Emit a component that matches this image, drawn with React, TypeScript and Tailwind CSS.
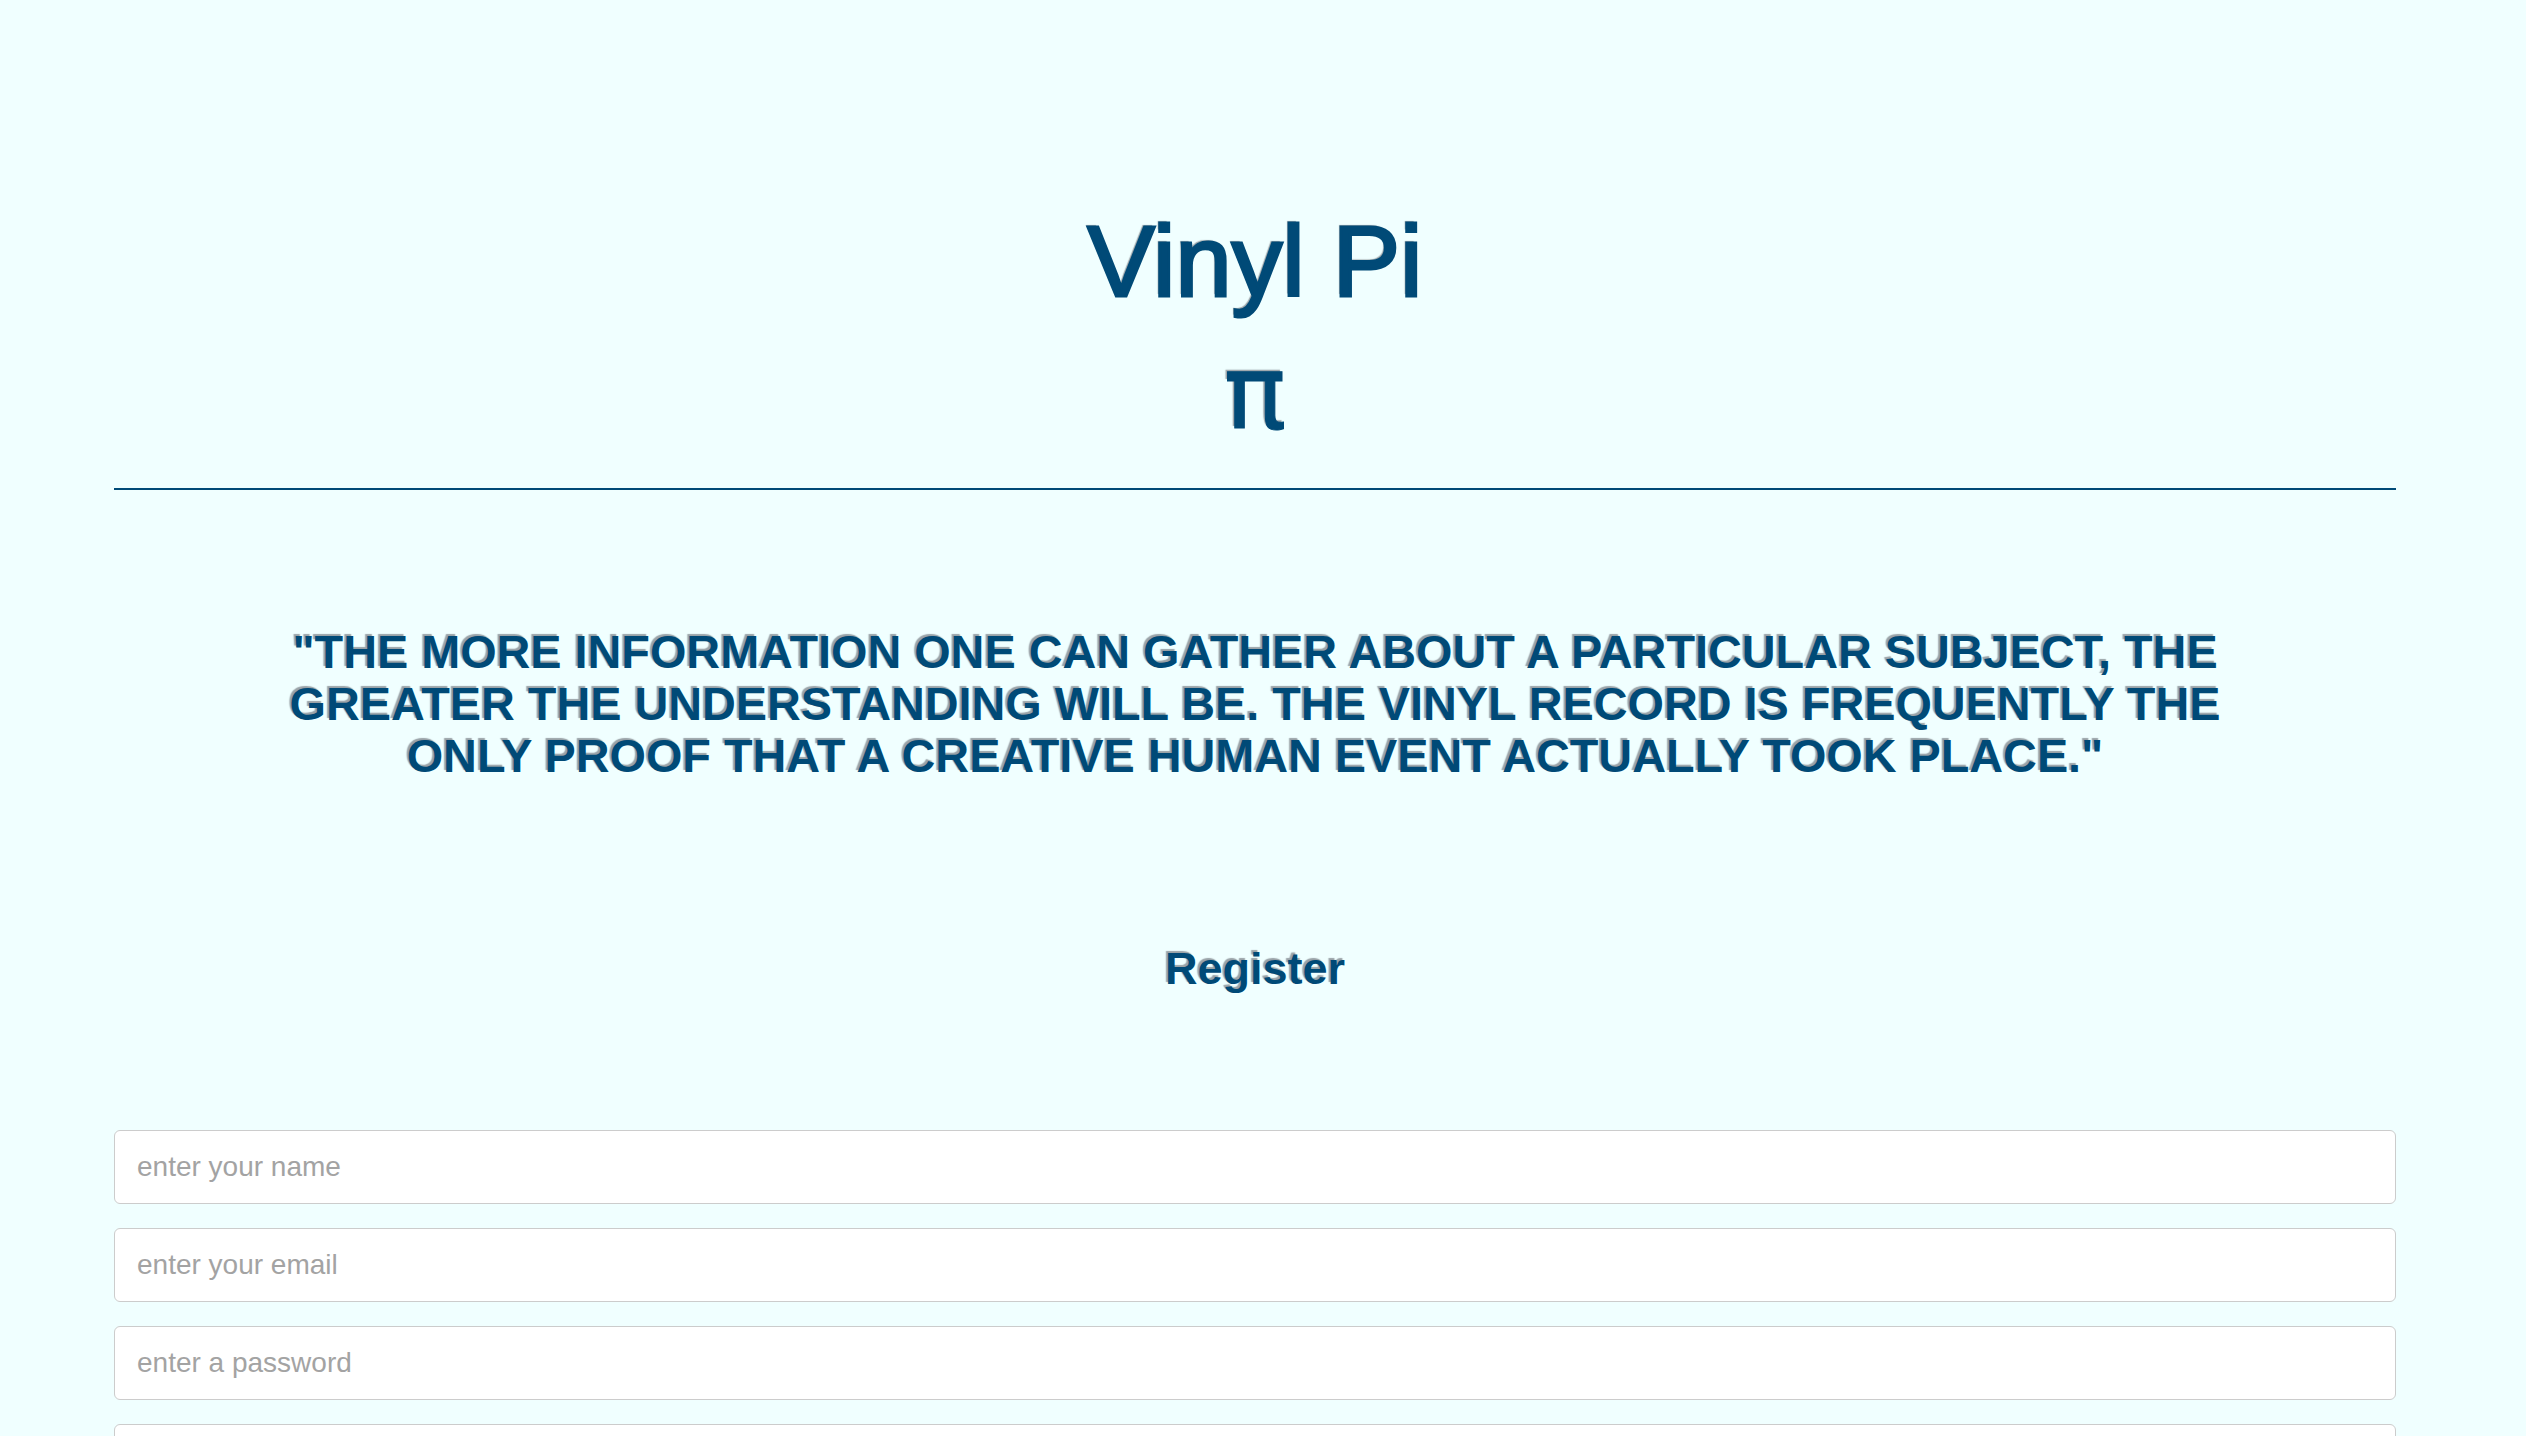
const ink = "text-[#004a77]";

export default function App() {
  return (
    <div className="min-h-screen bg-[#f0ffff] font-['Liberation_Sans',Arial,sans-serif]">
      <div className="ml-[114px] w-[2282px] pb-24">
        {/* Header */}
        <header className="pt-[206px] text-center">
          <h1
            className={`${ink} text-[101px] leading-[110px] [-webkit-text-stroke:3px_#004a77] [text-shadow:-2px_-2px_1px_#9aa3a8]`}
          >
            Vinyl Pi
          </h1>
          <div
            className={`${ink} mt-[21px] font-['DejaVu_Sans',sans-serif] text-[104px] leading-[110px] [-webkit-text-stroke:1px_#004a77] [text-shadow:-2px_-2px_1px_#9aa3a8]`}
          >
            π
          </div>
        </header>

        <hr className="mt-[41px] border-0 border-t-2 border-[#004a77]" />

        {/* Quote */}
        <p
          className={`${ink} mt-[136px] px-[160px] text-center text-[46.8px] font-bold uppercase leading-[52px] [text-shadow:-2px_-2px_1px_#9aa3a8]`}
        >
          "The more information one can gather about a particular subject, the
          greater the understanding will be. The vinyl record is frequently the
          only proof that a creative human event actually took place."
        </p>

        <h2
          className={`${ink} mt-[162px] text-center text-[45px] font-bold leading-[50px] [text-shadow:-2px_-2px_1px_#9aa3a8]`}
        >
          Register
        </h2>

        {/* Form */}
        <form className="mt-[136px] flex flex-col gap-[24px]">
          {["enter your name", "enter your email", "enter a password", "confirm your password"].map(
            (ph) => (
              <input
                key={ph}
                type={ph.includes("password") ? "password" : "text"}
                placeholder={ph}
                className="h-[74px] w-full rounded-[6px] border border-[#cccccc] bg-white px-[22px] text-[28px] text-[#555] outline-none placeholder:text-[#a3a3a3]"
              />
            ),
          )}
          <button
            type="button"
            className="mx-auto mt-4 rounded-[6px] bg-[#004a77] px-10 py-4 text-[28px] text-white"
          >
            Sign Up
          </button>
        </form>
      </div>
    </div>
  );
}
